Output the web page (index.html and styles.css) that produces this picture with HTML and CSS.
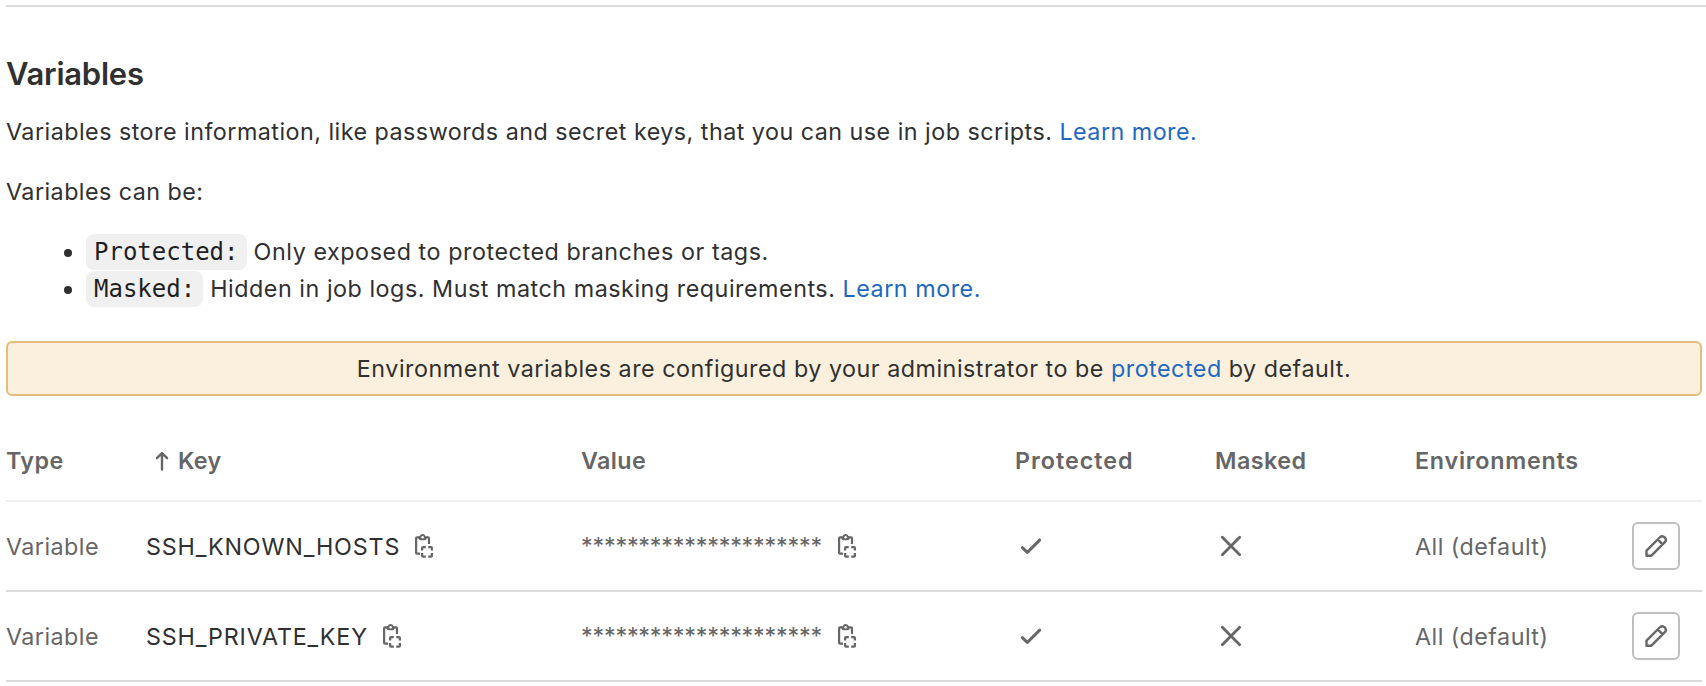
FILE: index.html
```html
<!DOCTYPE html>
<html lang="en">
<head>
<meta charset="utf-8">
<title>Variables</title>
<link rel="stylesheet" href="styles.css">
</head>
<body>
<svg class="sprite" aria-hidden="true">
  <symbol id="copy" viewBox="0 0 24 24">
    <path d="M8 19.7H5.1Q4.1 19.7 4.1 18.7V4.3Q4.1 3.3 5.1 3.3H16Q17 3.3 17 4.3V10" fill="none" stroke="currentColor" stroke-width="2.2"/>
    <path d="M6.4 2.4H7.5A3.2 3.2 0 0 1 13.7 2.4H14.7V4.4Q14.3 6.2 12.5 6.2H8.6Q6.8 6.2 6.4 4.4Z" fill="currentColor"/>
    <circle cx="10.6" cy="3.3" r="1.2" fill="#fff"/>
    <path d="M10.1 16.6V14.1Q10.1 13.1 11.1 13.1H13.8M16.2 13.1H18.9Q19.9 13.1 19.9 14.1V16.6M19.9 19.1V21.7Q19.9 22.7 18.9 22.7H16.2M13.8 22.7H11.1Q10.1 22.7 10.1 21.7V19.1" fill="none" stroke="currentColor" stroke-width="2.3"/>
  </symbol>
  <symbol id="check" viewBox="0 0 32 32">
    <path d="M7.3 17.6 12.3 22.4 24.7 10.1" fill="none" stroke="currentColor" stroke-width="2.9" stroke-linecap="round" stroke-linejoin="round"/>
  </symbol>
  <symbol id="close" viewBox="0 0 32 32">
    <path d="M7.3 7.3 24.7 24.7M24.7 7.3 7.3 24.7" fill="none" stroke="currentColor" stroke-width="2.8" stroke-linecap="round"/>
  </symbol>
  <symbol id="pencil" viewBox="0 0 24 24">
    <path d="M2.5 21.7V16.6L16.2 3Q18.4 1.2 20.7 3.4 22.9 5.7 21.1 7.9L7.4 21.7ZM13.8 5.4 18.6 10.3" fill="none" stroke="currentColor" stroke-width="2.4" stroke-linejoin="round"/>
  </symbol>
</svg>
<main class="page">
  <hr class="rule">
  <h4 class="title">Variables</h4>
  <p class="text">Variables store information, like passwords and secret keys, that you can use in job scripts. <a class="link" href="#">Learn more.</a></p>
  <p class="text intro">Variables can be:</p>
  <ul class="list">
    <li class="item"><code class="code">Protected:</code> Only exposed to protected branches or tags.</li>
    <li class="item masked"><code class="code">Masked:</code> Hidden in job logs. Must match masking requirements. <a class="link" href="#">Learn more.</a></li>
  </ul>
  <p class="banner"><span>Environment variables are configured by your administrator to be <a class="link" href="#">protected</a> by default.</span></p>
  <div class="row head">
    <span class="type">Type</span>
    <span class="key"><svg class="arrow" viewBox="0 0 14 20"><path d="M7 18.6V2.2M1.9 7.2 7 2.1 12.1 7.2" fill="none" stroke="currentColor" stroke-width="2.4" stroke-linecap="round" stroke-linejoin="round"/></svg>Key</span>
    <span class="value">Value</span>
    <span class="wide">Protected</span>
    <span>Masked</span>
    <span class="env">Environments</span>
    <span></span>
  </div>
  <div class="row">
    <span class="type cell">Variable</span>
    <span class="name"><span class="cell">SSH_KNOWN_HOSTS</span><svg class="copy"><use href="#copy"/></svg></span>
    <span class="secret">*********************<svg class="copy"><use href="#copy"/></svg></span>
    <span><svg class="mark"><use href="#check"/></svg></span>
    <span><svg class="mark"><use href="#close"/></svg></span>
    <span class="cell">All (default)</span>
    <button class="edit" aria-label="Edit"><svg class="pencil"><use href="#pencil"/></svg></button>
  </div>
  <div class="row">
    <span class="type cell">Variable</span>
    <span class="name"><span class="cell">SSH_PRIVATE_KEY</span><svg class="copy"><use href="#copy"/></svg></span>
    <span class="secret">*********************<svg class="copy"><use href="#copy"/></svg></span>
    <span><svg class="mark"><use href="#check"/></svg></span>
    <span><svg class="mark"><use href="#close"/></svg></span>
    <span class="cell">All (default)</span>
    <button class="edit" aria-label="Edit"><svg class="pencil"><use href="#pencil"/></svg></button>
  </div>
</main>
</body>
</html>
```
FILE: styles.css
```css
* { box-sizing: border-box; }
body {
  margin: 0;
  background: #fff;
  color: #303030;
  font: 400 23.3px/36px Inter, "Liberation Sans", sans-serif;
  letter-spacing: 0.48px;
  overflow: hidden;
}
.sprite { display: none; }
.page { padding: 5px 0 0 6px; }
.rule { height: 2px; margin: 0; border: 0; background: #dbdbdb; }
.title {
  margin: 47px 0 0;
  font-size: 31px;
  line-height: 40px;
  font-weight: 600;
  letter-spacing: -0.25px;
}
.text { margin: 20px 0 0; }
.intro { margin-top: 24px; letter-spacing: 0.46px; }
.link { color: #1f68c1; text-decoration: none; }
.list { margin: 23px 0 34px; padding: 0 0 0 80px; list-style: none; letter-spacing: 0.56px; }
.item { position: relative; height: 37px; line-height: 37px; }
.masked { letter-spacing: 0.53px; }
.item::before {
  content: "";
  position: absolute;
  left: -22px;
  top: 16px;
  width: 8px;
  height: 8px;
  border-radius: 50%;
  background: #303030;
}
.code {
  display: inline-block;
  height: 36px;
  padding: 0 8px;
  border-radius: 8px;
  background: #f0f0f0;
  color: #1f1f1f;
  font: 24px/36px "DejaVu Sans Mono", monospace;
  letter-spacing: 0;
}
.banner {
  display: flex;
  align-items: center;
  justify-content: center;
  height: 55px;
  margin: 0 4px 0 0;
  border: 2px solid #e3be7a;
  border-radius: 6px;
  background: #faf0dd;
  letter-spacing: 0.51px;
}
.row {
  display: grid;
  grid-template-columns: 140px 435px 434px 200px 200px 217px 48px;
  align-items: center;
  height: 90px;
  margin-right: 4px;
  border-bottom: 2px solid #dbdbdb;
  color: #666;
}
.row > span { display: flex; align-items: center; }
.row .cell { padding-top: 2px; }
.head { height: 106px; padding-top: 25px; border-color: #f0f0f0; font-weight: 600; }
.row .type { letter-spacing: 0.45px; }
.row .value { letter-spacing: 0.38px; }
.row .key { padding-left: 9px; letter-spacing: 0.3px; }
.row .wide { letter-spacing: 1px; }
.row .env { letter-spacing: 0.76px; }
.row .name { color: #303030; letter-spacing: 0.84px; }
.row .secret { letter-spacing: -0.2px; }
.arrow { width: 14px; height: 20px; margin-right: 9px; }
.copy { width: 24px; height: 24px; margin-left: 13px; color: #666; }
.name .copy { margin-left: 12px; }
.mark { width: 32px; height: 32px; }
.edit {
  display: flex;
  align-items: center;
  justify-content: center;
  width: 48px;
  height: 48px;
  padding: 0;
  border: 2px solid #bfbfbf;
  border-radius: 6px;
  background: #fff;
  color: #666;
}
.pencil { width: 24px; height: 24px; }
```
